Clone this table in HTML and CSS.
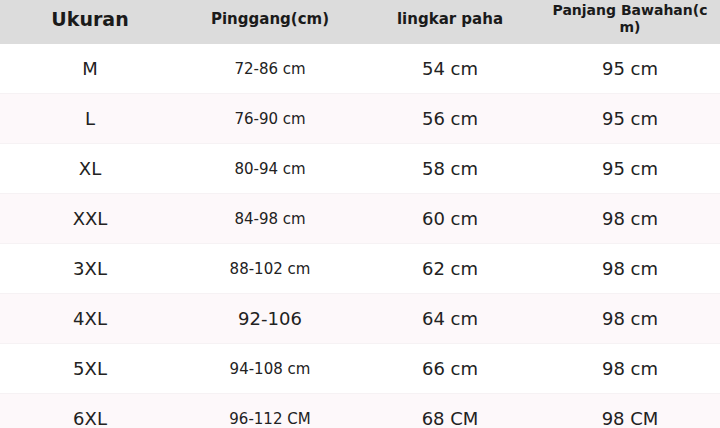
FILE: index.html
```html
<!DOCTYPE html>
<html>
<head>
<meta charset="utf-8">
<link rel="stylesheet" href="styles.css">
</head>
<body>
<table class="size-table">
  <thead>
    <tr>
      <th class="h-big">Ukuran</th>
      <th>Pinggang(cm)</th>
      <th>lingkar paha</th>
      <th class="h-wrap">Panjang Bawahan(cm)</th>
    </tr>
  </thead>
  <tbody>
    <tr><td>M</td><td class="sm">72-86 cm</td><td>54 cm</td><td>95 cm</td></tr>
    <tr class="alt"><td>L</td><td class="sm">76-90 cm</td><td>56 cm</td><td>95 cm</td></tr>
    <tr><td>XL</td><td class="sm">80-94 cm</td><td>58 cm</td><td>95 cm</td></tr>
    <tr class="alt"><td>XXL</td><td class="sm">84-98 cm</td><td>60 cm</td><td>98 cm</td></tr>
    <tr><td>3XL</td><td class="sm">88-102 cm</td><td>62 cm</td><td>98 cm</td></tr>
    <tr class="alt"><td>4XL</td><td>92-106</td><td>64 cm</td><td>98 cm</td></tr>
    <tr><td>5XL</td><td class="sm">94-108 cm</td><td>66 cm</td><td>98 cm</td></tr>
    <tr class="alt"><td>6XL</td><td class="sm">96-112 CM</td><td>68 CM</td><td>98 CM</td></tr>
  </tbody>
</table>
</body>
</html>
```
FILE: styles.css
```css
html, body {
  margin: 0;
  padding: 0;
  background: #ffffff;
}
body {
  font-family: "DejaVu Sans", "Liberation Sans", sans-serif;
  color: #222222;
  overflow: hidden;
}
.size-table {
  width: 720px;
  border-collapse: collapse;
  table-layout: fixed;
}
.size-table th {
  background: #dcdcdc;
  height: 39px;
  padding: 0 10px 5px;
  font-size: 15px;
  font-weight: bold;
  line-height: 17px;
  text-align: center;
  vertical-align: middle;
  color: #1a1a1a;
}
.size-table th.h-big {
  font-size: 19px;
}
.size-table th.h-wrap {
  font-size: 14px;
  word-break: break-all;
  padding: 0 10px 7px;
  height: 37px;
}
.size-table td {
  height: 49px;
  padding: 0;
  text-align: center;
  vertical-align: middle;
  font-size: 18px;
  border-bottom: 1px solid #f6f2f4;
}
.size-table td.sm {
  font-size: 15px;
}
.size-table tr.alt td {
  background: #fdf8fa;
}
```
